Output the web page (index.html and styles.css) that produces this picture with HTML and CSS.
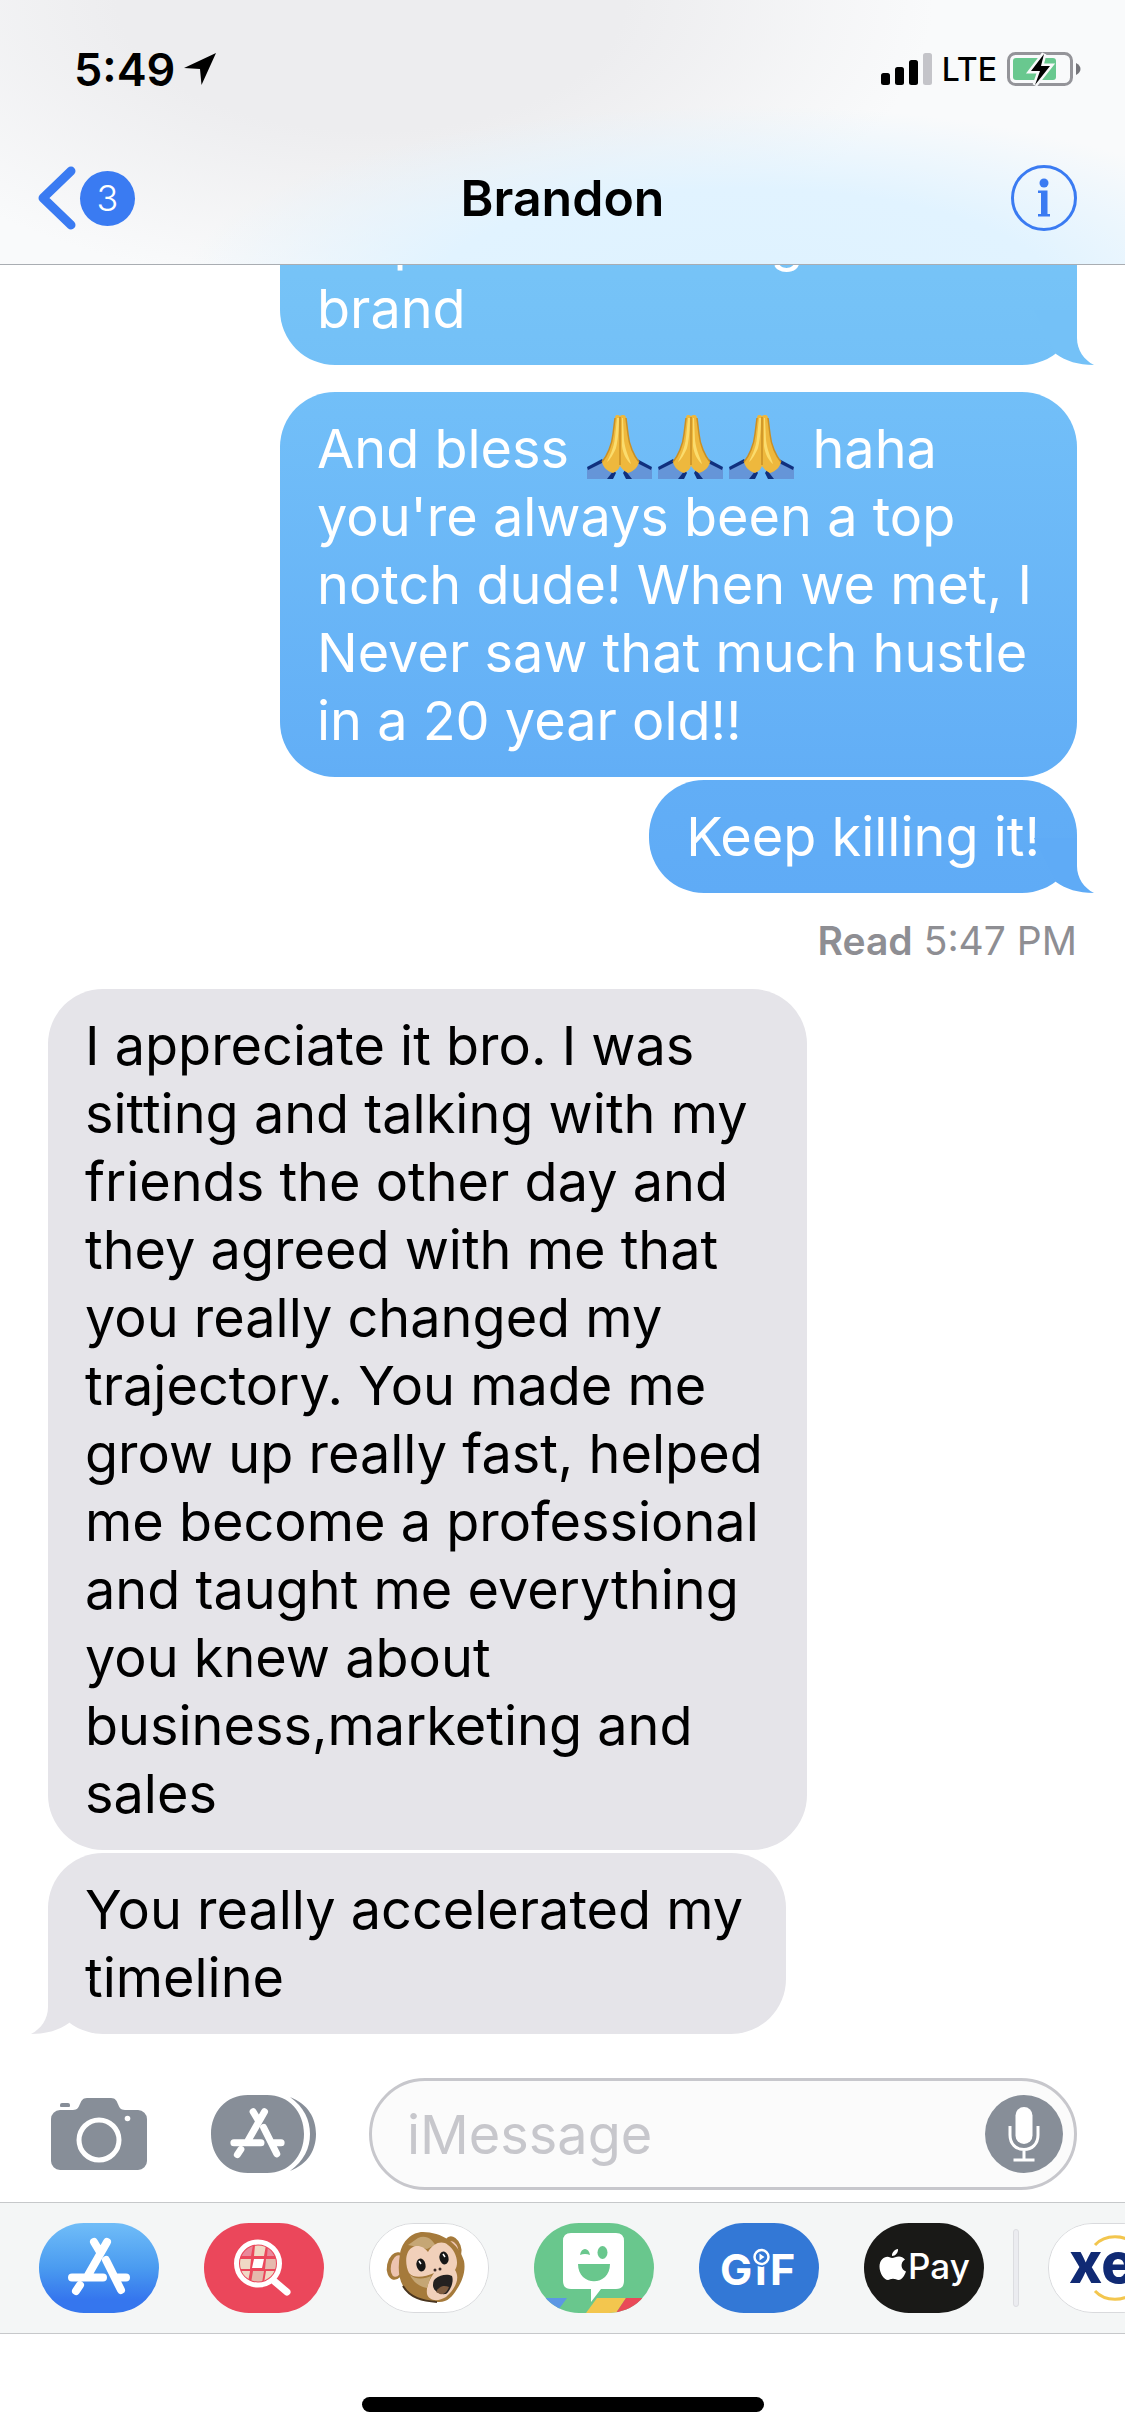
FILE: index.html
```html
<!DOCTYPE html>
<html lang="en">
<head>
<meta charset="utf-8">
<meta name="viewport" content="width=device-width, initial-scale=1">
<title>Brandon</title>
<link rel="stylesheet" href="styles.css">
</head>
<body>
<svg class="defs" aria-hidden="true">
  <defs>
    <linearGradient id="store-blue" x1="0" y1="0" x2="0" y2="1">
      <stop offset="0" stop-color="#70bdf8"/><stop offset="0.5" stop-color="#4a9bf0"/><stop offset="0.85" stop-color="#3576ee"/><stop offset="1" stop-color="#3576ee"/>
    </linearGradient>
    <symbol id="store-glyph" viewBox="0 0 120 90">
      <g fill="none" stroke="currentColor" stroke-width="8" stroke-linecap="round" stroke-linejoin="round">
        <path d="M68 19 48 54M55 19l6 10M33 54.500H64M79 54.500H87"/>
        <path d="M41 62l-4 6"/>
        <path d="M67 37 82 67"/>
      </g>
    </symbol>
    <symbol id="hands" viewBox="0 0 65 64">
      <path d="M0 53 17 45 27 57 24 64H0z" fill="#6595d8"/>
      <path d="M65 53 48 45 38 57 41 64h24z" fill="#6595d8"/>
      <path d="M0 52 15 44l2 3L1 55zM65 52 50 44l-2 3 16 8zM27 55l-7 9h6l3-6zM38 55l7 9h-6l-3-6z" fill="#10307e"/>
      <path d="M33 1C30-1 28 0 28 3L26 19C25 30 20 41 15 47c1 5 5 9 11 11 4-2 6-4 7-7z" fill="#eeb83d"/>
      <path d="M33 1c3-2 6-1 6 2l2 16c1 11 6 22 11 28-1 5-5 9-11 11-4-2-6-4-8-7z" fill="#eeb83d"/>
      <path d="M30 3 28 22c-1 12-6 20-8 25 3-2 7-9 9-14 2-8 3-20 3-30zM35 3v28c1 8 5 15 9 18-2-7-6-14-7-24L36 3z" fill="#fbdc6d"/>
      <path d="M28 3 26 19C25 30 20 41 15 47M39 3l2 16c1 11 6 22 11 28M33 2v48" fill="none" stroke="#c98f25" stroke-width="1.500"/>
    </symbol>
    <symbol id="tail-shape" viewBox="0 0 60 55">
      <path d="M0 0H43V28C43 40 50 50 60 55C44 55 32 51 22 44Z" fill="currentColor"/>
    </symbol>
  </defs>
</svg>

<div class="phone">
  <header class="top">
    <div class="status">
      <div class="clock">
        <span>5:49</span>
        <svg width="32" height="32" viewBox="0 0 32 32" aria-hidden="true"><path d="M32 0 17.500 32 16 16 0 15z"/></svg>
      </div>
      <div class="signal">
        <svg width="51" height="32" viewBox="0 0 51 32" aria-label="Signal"><rect y="20" width="9" height="12" rx="2.500"/><rect x="14" y="14" width="9" height="18" rx="2.500"/><rect x="28" y="7" width="9" height="25" rx="2.500"/><rect x="42" width="9" height="32" rx="2.500" fill="#c4c4c9"/></svg>
        <span class="carrier">LTE</span>
        <svg width="74" height="34" viewBox="0 0 74 34" aria-label="Battery charging">
          <rect x="1.500" y="1.500" width="63" height="31" rx="7" fill="none" stroke="#949499" stroke-width="3"/>
          <rect x="6" y="6" width="43" height="22" rx="3" fill="#69c88f"/>
          <path d="M69 11c6 3 6 9 0 12z" fill="#75757a"/>
          <path d="M37 2 24 19h9l-5 14L43 14h-9z" fill="#000" stroke="#f8f9fa" stroke-width="5" paint-order="stroke"/>
        </svg>
      </div>
    </div>
    <nav class="nav">
      <a class="back" href="#" aria-label="Back, 3 unread">
        <svg width="38" height="64" viewBox="0 0 38 64" aria-hidden="true"><path d="M33 5 5 32 33 59" fill="none" stroke="#3a7bf2" stroke-width="9" stroke-linecap="round" stroke-linejoin="round"/></svg>
        <span class="badge">3</span>
      </a>
      <h1>Brandon</h1>
      <button class="info" type="button" aria-label="Details">
        <svg width="66" height="66" viewBox="0 0 66 66" aria-hidden="true"><circle cx="33" cy="33" r="31.500" fill="none" stroke="#3a7bf2" stroke-width="3"/><circle cx="33" cy="18" r="4.500" fill="#3a7bf2"/><path d="M27 25.500h9.500V49H39v2.500H27V49h3V28h-3z" fill="#3a7bf2"/></svg>
      </button>
    </nav>
  </header>

  <main class="chat">
    <div class="bubble out wide first">help us with selling the brand<svg class="tail" aria-hidden="true"><use href="#tail-shape"/></svg></div>
    <div class="bubble out wide second">And bless <svg class="emoji" role="img" aria-label="folded hands"><use href="#hands"/></svg><svg class="emoji" role="img" aria-label="folded hands"><use href="#hands"/></svg><svg class="emoji" role="img" aria-label="folded hands"><use href="#hands"/></svg> haha you're always been a top notch dude! When we met, I Never saw that much hustle in a 20 year old!!</div>
    <div class="bubble out third">Keep killing it!<svg class="tail" aria-hidden="true"><use href="#tail-shape"/></svg></div>
    <p class="receipt"><b>Read</b> 5:47 PM</p>
    <div class="bubble in long">I appreciate it bro. I was sitting and talking with my friends the other day and they agreed with me that you really changed my trajectory. You made me grow up really fast, helped me become a professional and taught me everything you knew about business,marketing and sales</div>
    <div class="bubble in short">You really accelerated my timeline<svg class="tail" aria-hidden="true"><use href="#tail-shape"/></svg></div>
  </main>

  <form class="composer">
    <button class="tool" type="button" aria-label="Camera">
      <svg width="96" height="72" viewBox="0 0 96 72" aria-hidden="true"><path fill="#878e98" d="M9 12H22C31 12 27 0 36 0H60C69 0 65 12 74 12H87a9 9 0 0 1 9 9V63a9 9 0 0 1-9 9H9a9 9 0 0 1-9-9V21a9 9 0 0 1 9-9zM9 8V7q0-2 2-2h6q2 0 2 2v1q0 1-1 1h-8q-1 0-1-1z"/><circle cx="48" cy="42" r="20" fill="none" stroke="#fff" stroke-width="5"/><circle cx="76.500" cy="20.500" r="2.800" fill="#fff"/></svg>
    </button>
    <button class="tool" type="button" aria-label="Apps">
      <svg width="105" height="78" viewBox="0 0 105 78" aria-hidden="true"><path fill="#878e98" d="M37 0H56C78 0 93 17 93 39S78 78 56 78H37C15 78 0 61 0 39S15 0 37 0zM79 2C97 9 105 23 105 39S97 69 79 76C93 66 99 53 99 39S93 12 79 2z"/><use href="#store-glyph" x="-6" y="0" width="105" height="79" color="#fff"/></svg>
    </button>
    <div class="field">
      <input type="text" aria-label="Message" placeholder="iMessage">
      <button type="button" aria-label="Record audio">
        <svg width="78" height="78" viewBox="0 0 78 78" aria-hidden="true"><circle cx="39" cy="39" r="39" fill="#878e98"/><rect x="30.500" y="12" width="17" height="37" rx="8.500" fill="#fff"/><path d="M25 31v9c0 9 6 14.500 14 14.500S53 49 53 40V31M39 55v10M28.500 65h21" fill="none" stroke="#fff" stroke-width="3"/></svg>
      </button>
    </div>
  </form>

  <nav class="apps" aria-label="iMessage apps">
    <button class="app" type="button" aria-label="App Store">
      <svg viewBox="0 0 120 90"><rect width="120" height="90" fill="url(#store-blue)"/><use href="#store-glyph" width="120" height="90" color="#fff"/></svg>
    </button>
    <button class="app" type="button" aria-label="Images">
      <svg viewBox="0 0 120 90"><rect width="120" height="90" fill="#eb475b"/>
        <clipPath id="lens"><circle cx="54" cy="40.500" r="18"/></clipPath>
        <g clip-path="url(#lens)"><path d="M36 22h13l-2 11H36zM64 22h10v11H63zM35 48h11l-2 12H35z" fill="#e9899a"/><path d="M51 22h11l-2 11H50zM35 36h12l-1 10H35zM62 48h12v12H60zM36 48h10l-2 10z" fill="#f0d9c5"/><path d="M62 36h12v10H61zM49 48h11l-2 12H47z" fill="#e5b9ad"/><path d="M50 36h10l-2 9H48z" fill="#fff"/></g>
        <circle cx="54" cy="40.500" r="21.500" fill="none" stroke="#fff" stroke-width="5"/><path d="M70 58 83 69" stroke="#fff" stroke-width="7" stroke-linecap="round"/></svg>
    </button>
    <button class="app pale" type="button" aria-label="Animoji">
      <svg viewBox="0 0 120 90"><rect width="120" height="90" fill="#fff"/>
        <ellipse cx="27" cy="43" rx="9" ry="14" transform="rotate(12 27 43)" fill="#a57a3b"/><ellipse cx="28" cy="43" rx="6" ry="11" transform="rotate(12 28 43)" fill="#edc4b0"/>
        <ellipse cx="84" cy="25" rx="8" ry="12" transform="rotate(-20 84 25)" fill="#a57a3b"/><ellipse cx="84" cy="26" rx="5" ry="8" transform="rotate(-20 84 26)" fill="#edc4b0"/>
        <path d="M54 9C43 9 33 18 31 31c-2 12-2 23 3 32 7 12 20 15 34 16 10 1 15-5 20-13 5-7 9-18 7-28C90 20 72 9 54 9z" fill="#a57a3b"/>
        <path d="M34 63c7 12 20 15 34 16" fill="none" stroke="#49351f" stroke-width="2"/>
        <path d="M49 15c8-4 15 2 17 7l-8 4-19-4z" fill="#c5a675"/>
        <path d="M39 29c5-9 15-7 20 0 5-9 14-12 20-7 7 5 12 17 7 25 6 9-1 20-9 27-8 5-17 4-19-3-1-7 2-14 7-21-9 4-20 6-25 0-3-6-4-15-1-21z" fill="#f1d0ba"/>
        <path d="M41 52c6 5 15 4 21 1l-4 12c-7-1-14-6-17-13z" fill="#c5a675"/>
        <ellipse cx="52" cy="42" rx="4.500" ry="6.500" transform="rotate(-12 52 42)" fill="#161616"/><ellipse cx="75" cy="35" rx="4.500" ry="6.500" transform="rotate(-12 75 35)" fill="#161616"/><path d="M50 38l2 3M74 31l2 3" stroke="#fff" stroke-width="1.500"/>
        <circle cx="66" cy="47" r="1.500" fill="#3b2b27"/><circle cx="71" cy="46" r="1.500" fill="#3b2b27"/>
        <path d="M66 56c6-5 13-5 17-3 2 5-1 14-6 18-7 1-12-3-13-8 0-3 0-5 2-7z" fill="#242120"/><path d="M67 69c3-6 8-7 13-5-2 5-5 8-9 7z" fill="#7c5a3e"/></svg>
    </button>
    <button class="app" type="button" aria-label="Bitmoji">
      <svg viewBox="0 0 120 90"><rect width="120" height="90" fill="#69c78d"/><path d="M0 75H33L22 90H0z" fill="#5c97e4"/><path d="M63 75H92L82 90H52z" fill="#f3c64e"/><path d="M92 75h28V90H82z" fill="#e94a58"/>
        <path d="M37 10H82q8 0 8 8V58q0 8-8 8H67L57 79V66H37q-8 0-8-8V18q0-8 8-8z" fill="#fff"/><path d="M44 41H76C76 64 44 64 44 41zM46 32C47 24 55 24 56 32Q51 30 46 32z" fill="#69c78d"/><ellipse cx="68.500" cy="29.500" rx="5" ry="6.500" fill="#69c78d"/></svg>
    </button>
    <button class="app" type="button" aria-label="GIF">
      <svg viewBox="0 0 120 90"><rect width="120" height="90" fill="#3378d6"/><text class="gif" x="21 56 71" y="62">GıF</text><circle cx="62.500" cy="34" r="10" fill="#3378d6"/><circle cx="62.500" cy="34" r="7" fill="none" stroke="#fff" stroke-width="2.500"/><path d="M60.500 30.500v7l5-3.500z" fill="#fff"/></svg>
    </button>
    <button class="app" type="button" aria-label="Apple Pay">
      <svg viewBox="0 0 120 90"><rect width="120" height="90" fill="#191917"/><path fill="#fff" d="M28 35c2 0 4-1.500 7-1.500 2 0 4.500 1 6 3-5 3-4.500 10 1 12-1.500 4-4 8.500-7.500 8.500-2 0-3-1.200-5.500-1.200S25.500 57 24 57c-4 0-8.500-7-8.500-13.500 0-6 4-9.800 8-9.800 2 0 3.500 1.300 4.500 1.300zM28 33c-.3-3.500 2.500-6.500 6-7 .5 3.500-2.500 7-6 7z"/><text class="pay" x="44" y="56">Pay</text></svg>
    </button>
    <span class="rule"></span>
    <button class="app pale" type="button" aria-label="XE">
      <svg viewBox="0 0 120 90"><rect width="120" height="90" fill="#fff"/><path d="M47 22C57 11 77 11 87 22M47 68C57 79 77 79 87 68" fill="none" stroke="#f3c64e" stroke-width="3"/><text class="xe" x="21" y="60">xe</text></svg>
    </button>
  </nav>

  <footer class="home"><span></span></footer>
</div>
</body>
</html>
```
FILE: styles.css
```css
* { box-sizing: border-box; }

body {
  margin: 0;
  background: #fff;
  color: #000;
  font-family: Inter, "Liberation Sans", sans-serif;
}

svg { display: block; }
.defs { position: absolute; width: 0; height: 0; }

button {
  padding: 0;
  border: 0;
  background: none;
  font-family: inherit;
  flex: none;
}

.phone {
  display: flex;
  flex-direction: column;
  height: 100vh;
  overflow: hidden;
}

/* Header */
.top {
  flex: none;
  padding-bottom: 6px;
  border-bottom: 1px solid #a9adb2;
  background:
    radial-gradient(ellipse 50% 70% at 66% 110%, #def2ff 0%, #e1f3ff 55%, rgba(225, 243, 255, 0) 100%),
    radial-gradient(ellipse 50% 110% at 33% 0%, #ededef 0%, #ededef 45%, rgba(237, 237, 239, 0) 100%),
    #f9fafb;
}

.status {
  display: flex;
  align-items: center;
  justify-content: space-between;
  height: 138px;
  padding: 0 44px 0 74px;
}

.clock {
  display: flex;
  align-items: center;
  gap: 9px;
  font-size: 45px;
  font-weight: 600;
}

.signal {
  display: flex;
  align-items: center;
  gap: 10px;
}

.carrier { font-size: 32px; font-weight: 500; }

.nav {
  display: grid;
  grid-template-columns: 1fr auto 1fr;
  align-items: center;
  height: 120px;
  padding: 0 38px;
}

.back {
  display: flex;
  align-items: center;
  gap: 4px;
  text-decoration: none;
}

.badge {
  width: 55px;
  height: 55px;
  border-radius: 50%;
  background: #3a7bf2;
  color: #fff;
  font-size: 36px;
  font-weight: 300;
  line-height: 55px;
  text-align: center;
}

h1 {
  margin: 0;
  font-size: 50px;
  font-weight: 600;
}

.info { justify-self: end; margin-right: 10px; }

/* Conversation */
.chat {
  display: flex;
  flex: 1;
  flex-direction: column;
  justify-content: flex-end;
  gap: 3px;
  min-height: 0;
  padding: 0 48px 25px;
  overflow: hidden;
}

.bubble {
  position: relative;
  flex: none;
  padding: 23px 37px 22px;
  border-radius: 55px;
  font-size: 54px;
  line-height: 68px;
}

.out { align-self: flex-end; color: #fff; }
.in { align-self: flex-start; background: #e5e4e9; }

.wide { width: 797px; max-width: 90%; }
.long { width: 759px; max-width: 90%; }
.short { width: 738px; max-width: 90%; }

.first { margin-bottom: 24px; background: linear-gradient(#79c6f7, #73c0f7); }
.second { background: linear-gradient(#72bff8, #62aef6); }
.third { background: linear-gradient(#62aef6, #5fabf6); }

.tail {
  position: absolute;
  right: -17px;
  bottom: 0;
  width: 60px;
  height: 55px;
  color: #5fabf6;
}

.first .tail { color: #74c1f7; }

.in .tail {
  right: auto;
  left: -17px;
  color: #e5e4e9;
  transform: scaleX(-1);
}

.emoji {
  display: inline-block;
  width: 65px;
  height: 64px;
  margin: -20px 3px;
  vertical-align: 9px;
}

.receipt {
  align-self: flex-end;
  margin: 21px 0;
  color: #8e8e93;
  font-size: 39px;
  line-height: 48px;
}

.receipt b { font-weight: 600; }

/* Composer */
.composer {
  display: flex;
  flex: none;
  align-items: center;
  padding: 19px 48px 12px 51px;
}

.tool { margin-right: 53px; }
.tool:first-child { margin-right: 64px; }

.field {
  display: flex;
  flex: 1;
  align-items: center;
  min-width: 0;
  height: 112px;
  padding: 0 11px 0 35px;
  border: 3px solid #c7c7cc;
  border-radius: 56px;
  background: #fbfbfb;
}

.field input {
  flex: 1;
  min-width: 0;
  padding: 0;
  border: 0;
  outline: 0;
  background: none;
  font: inherit;
  font-size: 54px;
}

.field input::placeholder { color: #c7c7cc; opacity: 1; }

/* App strip */
.apps {
  display: flex;
  flex: none;
  align-items: center;
  gap: 45px;
  padding: 20px 0 20px 39px;
  border-top: 1px solid #c6c8ca;
  border-bottom: 1px solid #c6c8ca;
  background: #f4f6f6;
  overflow: hidden;
}

.app {
  width: 120px;
  height: 90px;
  border-radius: 50px;
  overflow: hidden;
}

.app svg { width: 120px; height: 90px; }
.pale { border: 1px solid #d9dadd; }
.pale svg { margin: -1px; }

.rule {
  flex: none;
  width: 6px;
  height: 78px;
  margin: 0 -16px;
  border: 1px solid #dcdde1;
  border-radius: 3px;
  background: #ebecf0;
}

.gif { fill: #fff; font-size: 43px; font-weight: 700; }
.pay { fill: #fff; font-size: 35px; font-weight: 500; }
.xe { fill: #102a74; font-size: 56px; font-weight: 800; }

.home {
  display: flex;
  flex: none;
  justify-content: center;
  padding: 63px 0 24px;
}

.home span {
  width: 402px;
  height: 15px;
  border-radius: 8px;
  background: #000;
}
```
